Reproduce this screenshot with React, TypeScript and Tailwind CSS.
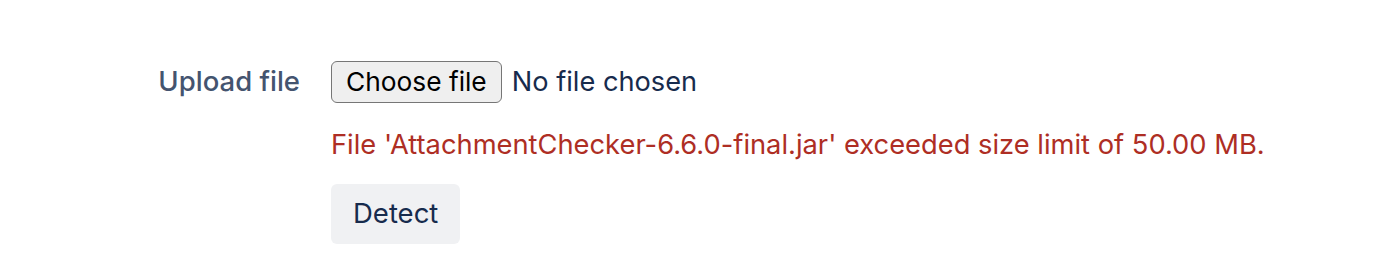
import React from 'react';

export default function App() {
  return (
    <div
      className="h-[274px] w-[1400px] bg-white"
      style={{ fontFamily: 'Inter, "Liberation Sans", Arial, sans-serif' }}
    >
      <div className="flex pt-[61px]">
        {/* Label column */}
        <div className="w-[300px] text-right">
          <label className="text-[27.5px] font-medium leading-[40px] text-[#44546f]">
            Upload file
          </label>
        </div>

        {/* Field column */}
        <div className="ml-[31px] flex flex-col">
          <div className="flex items-center">
            <button className="h-[42px] rounded-[6px] border-[1.5px] border-[#767676] bg-[#efefef] px-[14px] text-[26.3px] text-black">
              Choose file
            </button>
            <span className="ml-[10px] text-[27.2px] text-[#172b4d]">No file chosen</span>
          </div>

          <div className="mt-[24px] text-[27.3px] leading-[36px] text-[#ae2e24]">
            File 'AttachmentChecker-6.6.0-final.jar' exceeded size limit of 50.00 MB.
          </div>

          <div className="mt-[21px]">
            <button className="h-[60px] rounded-[6px] bg-[#f0f1f3] px-[22px] text-[27.5px] text-[#172b4d]">
              Detect
            </button>
          </div>
        </div>
      </div>
    </div>
  );
}
